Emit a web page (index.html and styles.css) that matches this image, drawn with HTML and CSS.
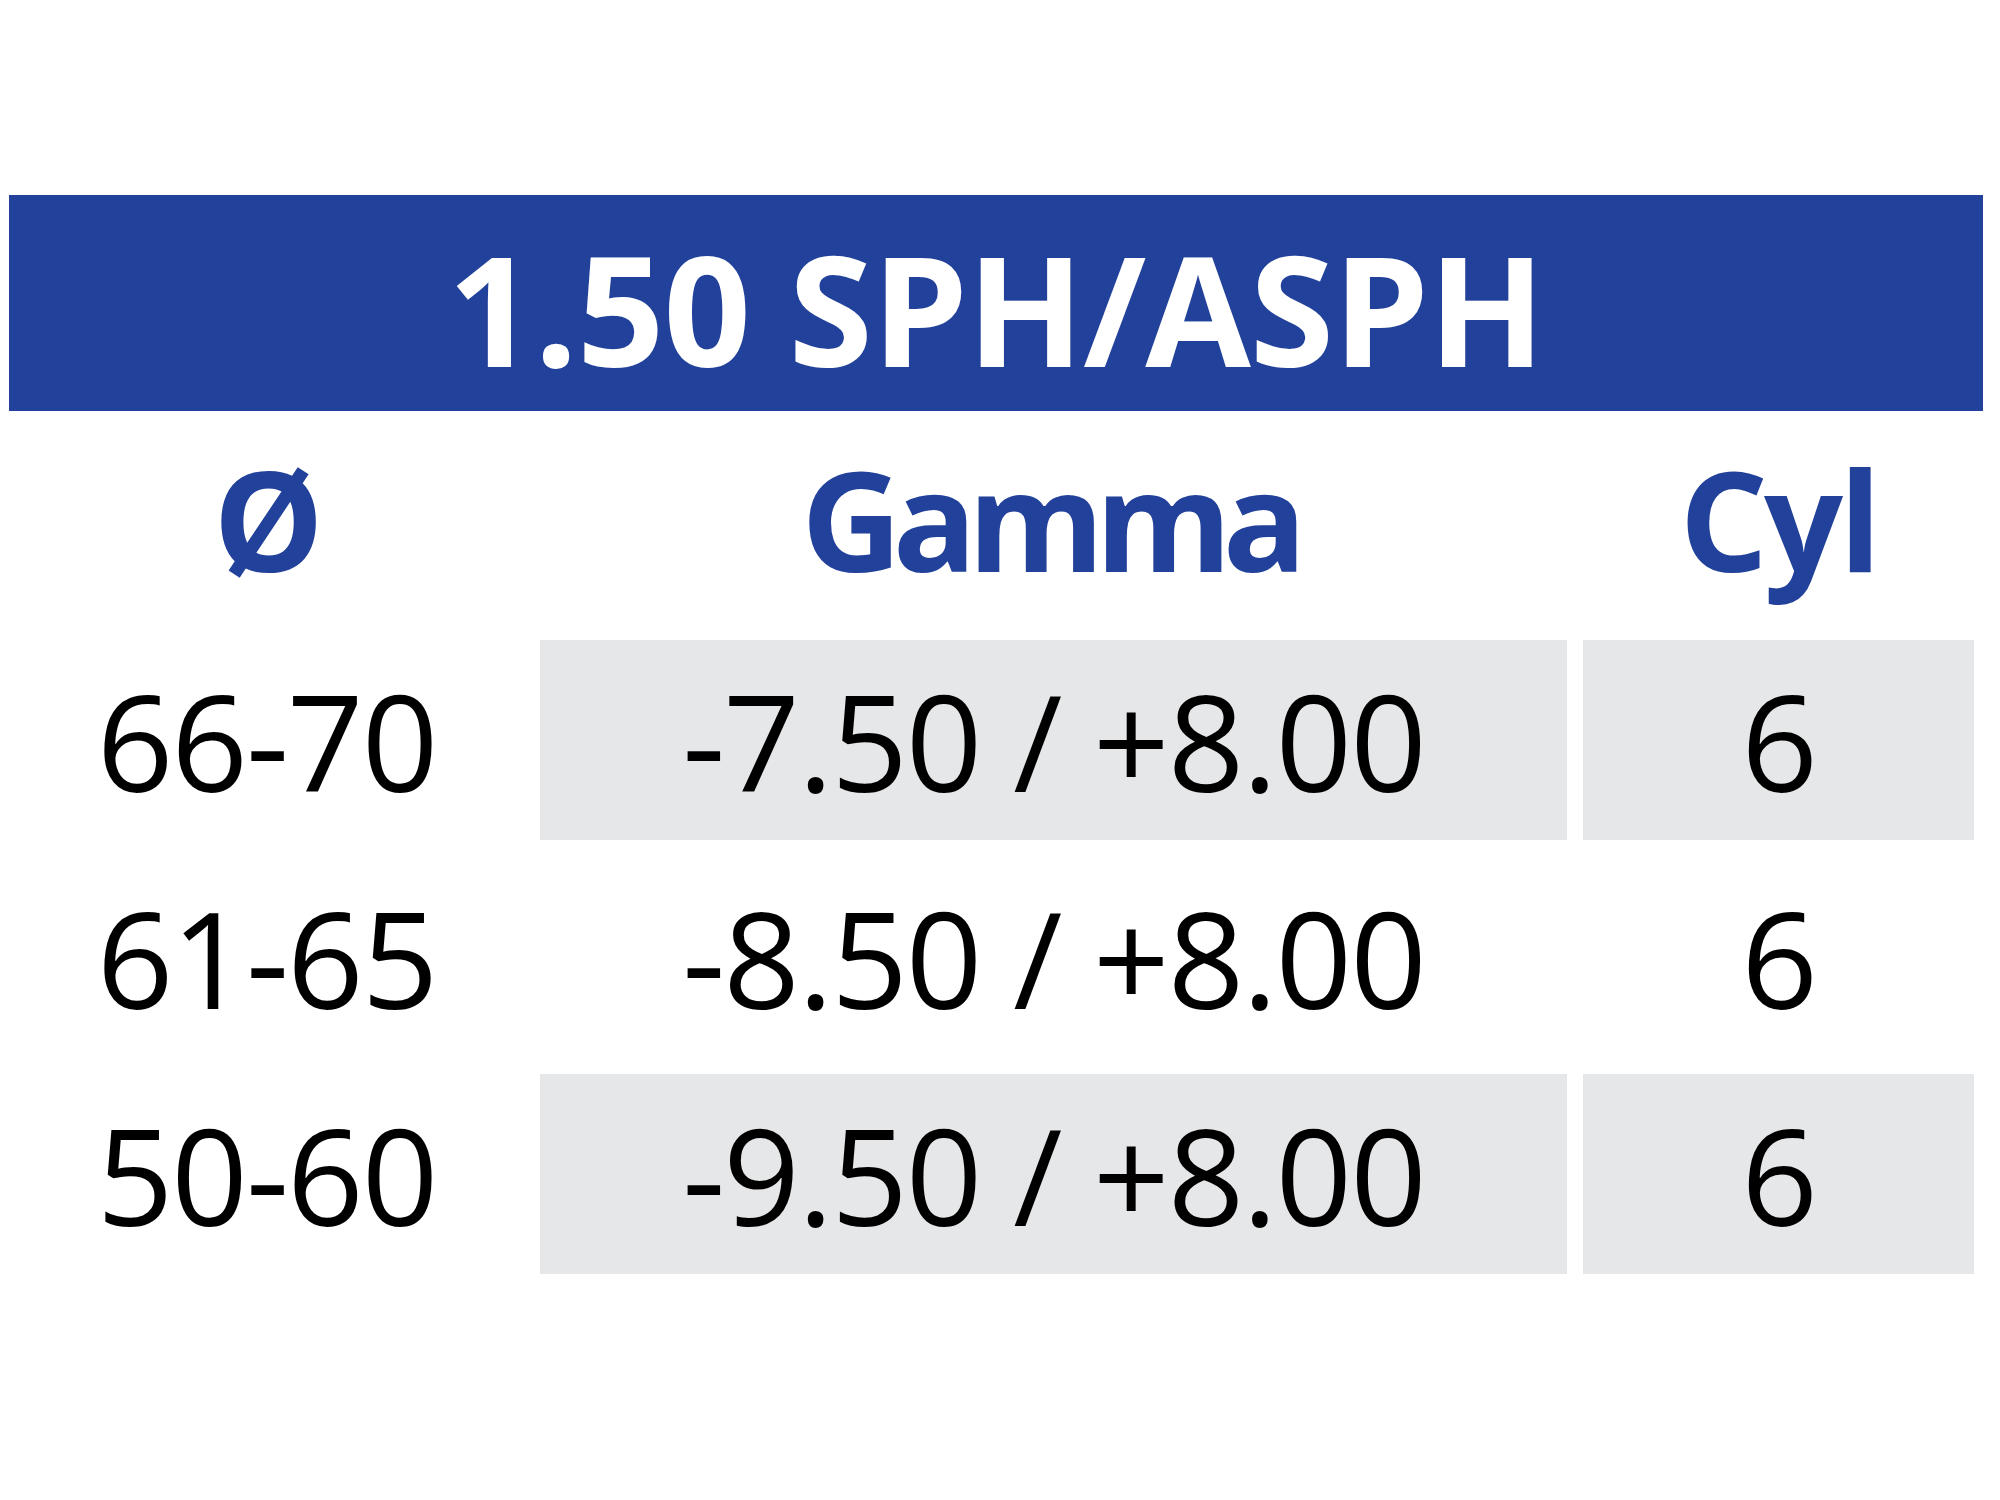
FILE: index.html
```html
<!DOCTYPE html>
<html lang="it">
<head>
<meta charset="utf-8">
<title>1.50 SPH/ASPH</title>
<link rel="stylesheet" href="styles.css">
</head>
<body>
<div class="page">
  <div class="title-bar">1.50 SPH/ASPH</div>
  <div class="grid head">
    <div class="hcell">Ø</div>
    <div class="hcell hcell-tight">Gamma</div>
    <div class="hcell">Cyl</div>
  </div>
  <div class="grid body">
    <div class="cell">66-70</div>
    <div class="cell shade">-7.50 / +8.00</div>
    <div class="cell shade">6</div>

    <div class="cell">61-65</div>
    <div class="cell">-8.50 / +8.00</div>
    <div class="cell">6</div>

    <div class="cell">50-60</div>
    <div class="cell shade">-9.50 / +8.00</div>
    <div class="cell shade">6</div>
  </div>
</div>
</body>
</html>
```
FILE: styles.css
```css
html, body {
  margin: 0;
  padding: 0;
  background: #ffffff;
}

.page {
  padding: 195px 0 0 9px;
  font-family: "Open Sans", "Noto Sans", sans-serif;
}

.title-bar {
  width: 1974px;
  height: 216px;
  box-sizing: border-box;
  padding-top: 10px;
  background: #22419a;
  color: #ffffff;
  font-weight: 700;
  font-size: 153px;
  line-height: 206px;
  letter-spacing: -1px;
  text-align: center;
  white-space: nowrap;
}

.grid {
  display: grid;
  grid-template-columns: 515px 1027px 391px;
  column-gap: 16px;
  width: 1965px;
}

.head {
  height: 229px;
}

.hcell {
  color: #22419a;
  font-weight: 700;
  font-size: 139px;
  line-height: 215px;
  letter-spacing: -4px;
  text-align: center;
  white-space: nowrap;
}

.hcell-tight {
  letter-spacing: -9px;
  padding-right: 8px;
}

.body {
  grid-auto-rows: 200px;
  row-gap: 17px;
}

.cell {
  color: #000000;
  font-size: 134px;
  line-height: 200px;
  letter-spacing: -2px;
  text-align: center;
  white-space: nowrap;
}

.shade {
  background: #e6e7e8;
}
```
